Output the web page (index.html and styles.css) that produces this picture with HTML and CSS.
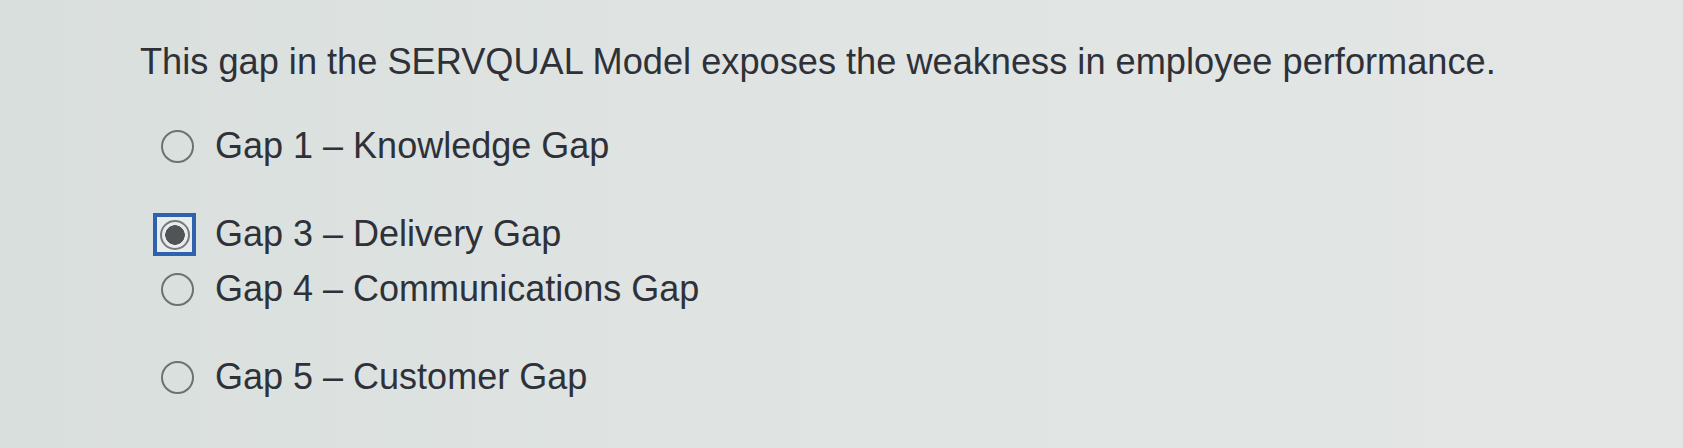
FILE: index.html
```html
<!DOCTYPE html>
<html lang="en">
<head>
<meta charset="utf-8">
<title>SERVQUAL question</title>
<link rel="stylesheet" href="styles.css">
</head>
<body>
<main class="question">
  <p class="prompt">This gap in the SERVQUAL Model exposes the weakness in employee performance.</p>
  <ul class="options">
    <li class="option option--first">
      <span class="radio-wrap"><span class="radio"></span></span>
      <span class="label">Gap 1 – Knowledge Gap</span>
    </li>
    <li class="option option--loose">
      <span class="radio-wrap radio-wrap--focus"><span class="radio radio--checked"></span></span>
      <span class="label">Gap 3 – Delivery Gap</span>
    </li>
    <li class="option option--tight">
      <span class="radio-wrap"><span class="radio"></span></span>
      <span class="label">Gap 4 – Communications Gap</span>
    </li>
    <li class="option option--loose">
      <span class="radio-wrap"><span class="radio"></span></span>
      <span class="label">Gap 5 – Customer Gap</span>
    </li>
  </ul>
</main>
</body>
</html>
```
FILE: styles.css
```css
html, body {
  margin: 0;
  padding: 0;
}
body {
  width: 1683px;
  height: 448px;
  overflow: hidden;
  background: linear-gradient(90deg, #d9dfdd 0%, #dfe4e2 40%, #e3e6e5 100%);
  font-family: "Liberation Sans", Arial, sans-serif;
  color: #2f3139;
}
.question {
  padding: 41px 0 0 140px;
}
.prompt {
  margin: 0;
  font-size: 36.2px;
  line-height: 42px;
}
.options {
  list-style: none;
  margin: 0;
  padding: 0 0 0 13px;
  display: flex;
  flex-direction: column;
}
.option {
  display: flex;
  align-items: center;
  gap: 19px;
  height: 44px;
}
.option--first { margin-top: 41px; }
.option--loose { margin-top: 44px; }
.option--tight { margin-top: 11px; }
.radio-wrap {
  box-sizing: border-box;
  flex-shrink: 0;
  width: 43px;
  height: 43px;
  display: flex;
  align-items: center;
  justify-content: center;
  border: 4px solid transparent;
  margin-top: 1px;
}
.radio-wrap--focus {
  border-color: #2f62ae;
  background: #e8ecec;
}
.radio {
  box-sizing: border-box;
  flex-shrink: 0;
  width: 33px;
  height: 33px;
  margin-left: 6px;
  border-radius: 50%;
  border: 2.8px solid #6f7171;
  background: transparent;
}
.radio--checked {
  width: 30px;
  height: 30px;
  margin-left: 0;
  border: 2.8px solid #77797a;
  background: radial-gradient(circle, #515456 0 9.5px, transparent 10px);
}
.label {
  font-size: 36px;
  line-height: 44px;
  white-space: nowrap;
}
```
